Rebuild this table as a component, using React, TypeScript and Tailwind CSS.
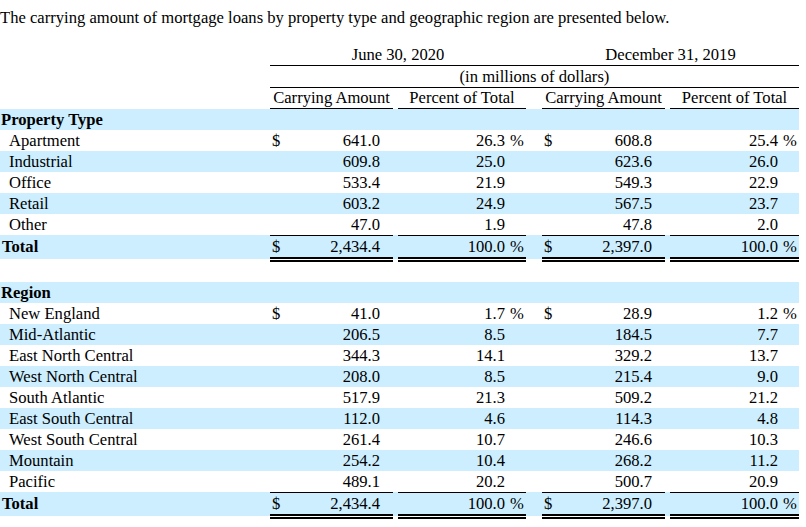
import React from "react";

const COLS =
  "grid grid-cols-[270px_123px_5px_128px_16px_123px_5px_129px] w-[799px]";

type RowData = { label: string; v: [string, string, string, string]; first?: boolean };

const property: RowData[] = [
  { label: "Apartment", v: ["641.0", "26.3", "608.8", "25.4"], first: true },
  { label: "Industrial", v: ["609.8", "25.0", "623.6", "26.0"] },
  { label: "Office", v: ["533.4", "21.9", "549.3", "22.9"] },
  { label: "Retail", v: ["603.2", "24.9", "567.5", "23.7"] },
  { label: "Other", v: ["47.0", "1.9", "47.8", "2.0"] },
];

const region: RowData[] = [
  { label: "New England", v: ["41.0", "1.7", "28.9", "1.2"], first: true },
  { label: "Mid-Atlantic", v: ["206.5", "8.5", "184.5", "7.7"] },
  { label: "East North Central", v: ["344.3", "14.1", "329.2", "13.7"] },
  { label: "West North Central", v: ["208.0", "8.5", "215.4", "9.0"] },
  { label: "South Atlantic", v: ["517.9", "21.3", "509.2", "21.2"] },
  { label: "East South Central", v: ["112.0", "4.6", "114.3", "4.8"] },
  { label: "West South Central", v: ["261.4", "10.7", "246.6", "10.3"] },
  { label: "Mountain", v: ["254.2", "10.4", "268.2", "11.2"] },
  { label: "Pacific", v: ["489.1", "20.2", "500.7", "20.9"] },
];

function DataRow({ row, blue }: { row: RowData; blue: boolean }) {
  return (
    <div className={`${COLS} h-[21px] leading-[21px] ${blue ? "bg-[#cceeff]" : "bg-white"}`}>
      <div className="pl-[9px] whitespace-nowrap">{row.label}</div>
      <div className="flex">
        <span className="pl-[2px]">{row.first ? "$" : ""}</span>
        <span className="flex-1 text-right">{row.v[0]}</span>
        <span className="w-[13px]" />
      </div>
      <div />
      <div className="flex">
        <span className="flex-1 text-right">{row.v[1]}</span>
        <span className="w-[21px] pl-[5px]">{row.first ? "%" : ""}</span>
      </div>
      <div />
      <div className="flex">
        <span className="pl-[2px]">{row.first ? "$" : ""}</span>
        <span className="flex-1 text-right">{row.v[2]}</span>
        <span className="w-[13px]" />
      </div>
      <div />
      <div className="flex">
        <span className="flex-1 text-right">{row.v[3]}</span>
        <span className="w-[21px] pl-[5px]">{row.first ? "%" : ""}</span>
      </div>
    </div>
  );
}

function TotalRow({ v }: { v: [string, string, string, string] }) {
  const cell =
    "h-[27px] box-border border-t border-b-[5px] border-black border-double bg-clip-padding bg-[#cceeff] leading-[21px] flex";
  const filler = "h-[24px] bg-[#cceeff]";
  return (
    <div className={`${COLS} items-start`}>
      <div className={`${filler} pl-[2px] pt-[1px] leading-[21px] font-bold`}>Total</div>
      <div className={cell}>
        <span className="pl-[2px]">$</span>
        <span className="flex-1 text-right">{v[0]}</span>
        <span className="w-[13px]" />
      </div>
      <div className={filler} />
      <div className={cell}>
        <span className="flex-1 text-right">{v[1]}</span>
        <span className="w-[21px] pl-[5px]">%</span>
      </div>
      <div className={filler} />
      <div className={cell}>
        <span className="pl-[2px]">$</span>
        <span className="flex-1 text-right">{v[2]}</span>
        <span className="w-[13px]" />
      </div>
      <div className={filler} />
      <div className={cell}>
        <span className="flex-1 text-right">{v[3]}</span>
        <span className="w-[21px] pl-[5px]">%</span>
      </div>
    </div>
  );
}

function SectionHead({ title }: { title: string }) {
  return (
    <div className="w-[799px] h-[21px] leading-[21px] bg-[#cceeff] pl-[1px] font-bold">
      {title}
    </div>
  );
}

export default function App() {
  return (
    <div className="min-h-[527px] w-[806px] bg-white text-black font-['Liberation_Serif',serif] text-[16.6px]">
      <div className="pt-[7px] h-[28px] leading-[21px] mb-[16px] whitespace-nowrap">
        The carrying amount of mortgage loans by property type and geographic region are presented below.
      </div>

      {/* Header row A */}
      <div className={`${COLS} h-[22px] leading-[21px]`}>
        <div />
        <div className="col-span-3 text-center border-b border-black">June 30, 2020</div>
        <div className="border-b border-black" />
        <div className="col-span-3 text-center border-b border-black">December 31, 2019</div>
      </div>

      {/* Header row B */}
      <div className={`${COLS} h-[22px] leading-[21px]`}>
        <div />
        <div className="col-span-7 text-center border-b border-black">(in millions of dollars)</div>
      </div>

      {/* Header row C */}
      <div className={`${COLS} h-[21px] leading-[20px]`}>
        <div />
        <div className="text-center border-b border-black whitespace-nowrap">Carrying Amount</div>
        <div />
        <div className="text-center border-b border-black whitespace-nowrap">Percent of Total</div>
        <div />
        <div className="text-center border-b border-black whitespace-nowrap">Carrying Amount</div>
        <div />
        <div className="text-center border-b border-black whitespace-nowrap">Percent of Total</div>
      </div>

      <SectionHead title="Property Type" />
      {property.map((r, i) => (
        <DataRow key={r.label} row={r} blue={i % 2 === 1} />
      ))}
      <TotalRow v={["2,434.4", "100.0", "2,397.0", "100.0"]} />

      <div className="h-[20px]" />

      <SectionHead title="Region" />
      {region.map((r, i) => (
        <DataRow key={r.label} row={r} blue={i % 2 === 1} />
      ))}
      <TotalRow v={["2,434.4", "100.0", "2,397.0", "100.0"]} />
    </div>
  );
}
